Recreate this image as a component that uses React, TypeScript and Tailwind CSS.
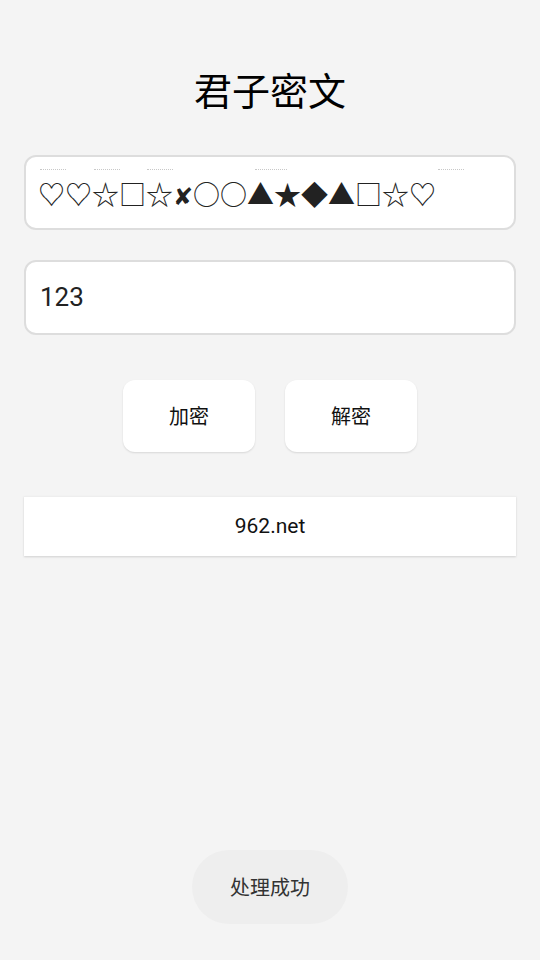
import React from "react";

const dots = [
  { left: 14, width: 26 },
  { left: 68, width: 26 },
  { left: 121, width: 26 },
  { left: 229, width: 32 },
  { left: 412, width: 26 },
];

export default function App() {
  return (
    <div className="min-h-[960px] w-[540px] bg-[#f4f4f4] flex flex-col px-6 font-['Roboto','Noto_Sans_CJK_SC',sans-serif]">
      <h1 className="mt-[63px] text-center text-[38px] leading-[52px] text-black font-['Noto_Sans_CJK_SC',sans-serif]">
        君子密文
      </h1>

      <div className="mt-[40px] h-[75px] rounded-[12px] border-2 border-[#dddddd] bg-white relative">
        {dots.map((d, i) => (
          <span
            key={i}
            className="absolute top-[12px] border-t border-dotted border-[#c8c8c8]"
            style={{ left: d.left, width: d.width }}
          />
        ))}
        <div className="pl-[12px] pt-[20px] text-[27px] leading-[34px] text-[#222] font-['Noto_Sans_CJK_SC','DejaVu_Sans',sans-serif]">
          ♡♡☆□☆<span className="font-['DejaVu_Sans',sans-serif] text-[24px]">✘</span>○○▲★◆▲□☆♡
        </div>
      </div>

      <div className="mt-[30px] h-[75px] rounded-[12px] border-2 border-[#dddddd] bg-white flex items-center px-[14px]">
        <span className="text-[26px] text-[#222]">123</span>
      </div>

      <div className="mt-[45px] flex justify-center gap-[30px]">
        <button className="w-[132px] h-[72px] rounded-[12px] bg-white shadow-[0_1px_2px_rgba(0,0,0,0.12)] text-[20px] text-[#111] font-['Noto_Sans_CJK_SC',sans-serif]">
          加密
        </button>
        <button className="w-[132px] h-[72px] rounded-[12px] bg-white shadow-[0_1px_2px_rgba(0,0,0,0.12)] text-[20px] text-[#111] font-['Noto_Sans_CJK_SC',sans-serif]">
          解密
        </button>
      </div>

      <div className="mt-[44px] h-[60px] bg-white border-t border-[#eeeeee] shadow-[0_1px_2px_rgba(0,0,0,0.15)] flex items-center justify-center">
        <span className="text-[21px] text-[#111]">962.net</span>
      </div>

      <div className="mt-[294px] flex justify-center">
        <div className="w-[156px] h-[74px] rounded-full bg-[#eeeeee] flex items-center justify-center text-[20px] text-[#333] font-['Noto_Sans_CJK_SC',sans-serif]">
          处理成功
        </div>
      </div>
    </div>
  );
}
